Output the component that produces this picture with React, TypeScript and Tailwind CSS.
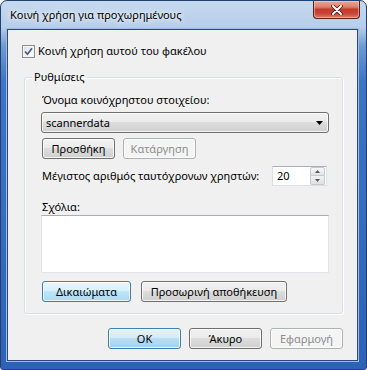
import React from "react";

type Variant = "normal" | "blue" | "disabled" | "default";

function Btn({
  children,
  variant = "normal",
  className = "",
}: {
  children: React.ReactNode;
  variant?: Variant;
  className?: string;
}) {
  const v =
    variant === "blue"
      ? "border-[#3c7fb1] bg-[linear-gradient(to_bottom,#eaf6fd_0%,#d9f0fc_45%,#bee6fd_50%,#a7d9f5_100%)] text-black"
      : variant === "default"
      ? "border-[#3c7fb1] bg-[linear-gradient(to_bottom,#e5f4fc_0%,#d3ebf9_45%,#b9ddf4_50%,#a5d2f0_100%)] text-black shadow-[inset_0_0_0_1px_#cdeefa]"
      : variant === "disabled"
      ? "border-[#adb2b5] bg-[#f4f4f4] text-[#8d8d8d]"
      : "border-[#707070] bg-[linear-gradient(to_bottom,#f2f2f2_0%,#ebebeb_45%,#dddddd_50%,#cfcfcf_100%)] text-black";
  return (
    <div
      className={`flex h-[21px] items-center justify-center rounded-[3px] border text-[11px] leading-[16px] shadow-[inset_0_0_0_1px_rgba(255,255,255,0.75)] ${v} ${className}`}
    >
      {children}
    </div>
  );
}

export default function App() {
  return (
    <div className="h-[370px] w-[367px] overflow-hidden bg-white font-['Noto_Sans',sans-serif] text-[11px] leading-[16px] text-black">
      <div className="flex h-[370px] w-[367px] flex-col rounded-t-[7px] rounded-b-[3px] border border-[#22406e] bg-[linear-gradient(to_bottom,#c6d9ef_0px,#b7cee9_26px,#6f9ad3_45px,#3f74c4_80px,#2d63b7_100%)] pb-[8px] pl-[6px] pr-[8px]">
        {/* title bar */}
        <div className="flex h-[28px] shrink-0 items-start justify-between">
          <div className="pl-[3px] pt-[6px] text-[11px] leading-[16px] text-black [text-shadow:0_0_8px_#ffffff,0_0_4px_#ffffff]">
            Κοινή χρήση για προχωρημένους
          </div>
          <div className="mr-[-2px] flex h-[18px] w-[47px] items-center justify-center rounded-b-[4px] border border-t-0 border-[#5a1f17] bg-[linear-gradient(to_bottom,#e9a99c_0%,#d9806f_35%,#c23a28_50%,#c8473a_75%,#e0806b_100%)] shadow-[inset_0_0_0_1px_rgba(255,210,200,0.5)]">
            <svg width="12" height="10" viewBox="0 0 12 10">
              <path d="M2 1 L10 9 M10 1 L2 9" stroke="#4a1a14" strokeWidth="3.6" strokeLinecap="round" />
              <path d="M2 1 L10 9 M10 1 L2 9" stroke="#ffffff" strokeWidth="2" strokeLinecap="round" />
            </svg>
          </div>
        </div>

        {/* client area */}
        <div className="flex h-[332px] flex-col border border-[#2b4a7a] bg-[#f0f0f0] shadow-[0_0_0_1px_#9dbbe3]">
          {/* checkbox row */}
          <div className="mt-[13px] flex h-[16px] items-center pl-[14px]">
            <div className="flex h-[13px] w-[13px] items-center justify-center border border-[#8e8f8f] bg-[linear-gradient(135deg,#dcdcdc_0%,#f6f6f6_60%,#ffffff_100%)] shadow-[inset_0_0_0_1px_#f4f4f4]">
              <svg width="9" height="9" viewBox="0 0 9 9">
                <path d="M1 4.5 L3.5 7.2 L8 1.2" stroke="#4a5f97" strokeWidth="1.8" fill="none" />
              </svg>
            </div>
            <span className="ml-[3px]">Κοινή χρήση αυτού του φακέλου</span>
          </div>

          {/* group box */}
          <fieldset className="ml-[16px] mr-[14px] mt-[10px] rounded-[3px] border border-[#d5dfe5] pb-[11px] pl-[16px] pr-[13px] shadow-[inset_1px_1px_0_#ffffff,1px_1px_0_#ffffff]">
            <legend className="ml-[-9px] px-[2px] leading-[16px]">Ρυθμίσεις</legend>
            <div className="ml-[1px] mt-[7px] h-[16px]">Όνομα κοινόχρηστου στοιχείου:</div>
            <div className="mt-[4px] flex h-[21px] items-center justify-between rounded-[3px] border border-[#707070] bg-[linear-gradient(to_bottom,#f2f2f2_0%,#ebebeb_45%,#dddddd_50%,#cfcfcf_100%)] pl-[4px] pr-[5px] shadow-[inset_0_0_0_1px_rgba(255,255,255,0.75)]">
              <span>scannerdata</span>
              <svg width="7" height="4" viewBox="0 0 7 4">
                <path d="M0 0 L7 0 L3.5 4 Z" fill="#000000" />
              </svg>
            </div>
            <div className="mt-[5px] flex gap-[8px] pl-[1px]">
              <Btn className="w-[73px]">Προσθήκη</Btn>
              <Btn variant="disabled" className="w-[73px]">
                Κατάργηση
              </Btn>
            </div>
            <div className="mt-[7px] flex h-[20px] items-center justify-between">
              <span className="ml-[1px] whitespace-nowrap">Μέγιστος αριθμός ταυτόχρονων χρηστών:</span>
              <div className="mr-[2px] flex h-[20px] w-[55px] items-center border border-[#dbdfe6] border-t-[#abadb3] bg-white">
                <span className="flex-1 pl-[4px]">20</span>
                <div className="mr-[1px] flex flex-col gap-0">
                  <div className="flex h-[9px] w-[15px] items-center justify-center rounded-t-[2px] border border-[#c5cad0] bg-[linear-gradient(to_bottom,#f7f7f7,#e4e4e4)]">
                    <svg width="5" height="3" viewBox="0 0 5 3">
                      <path d="M0 3 L5 3 L2.5 0 Z" fill="#555a63" />
                    </svg>
                  </div>
                  <div className="flex h-[9px] w-[15px] items-center justify-center rounded-b-[2px] border border-t-0 border-[#c5cad0] bg-[linear-gradient(to_bottom,#f2f2f2,#e0e0e0)]">
                    <svg width="5" height="3" viewBox="0 0 5 3">
                      <path d="M0 0 L5 0 L2.5 3 Z" fill="#555a63" />
                    </svg>
                  </div>
                </div>
              </div>
            </div>
            <div className="ml-[1px] mt-[13px] h-[16px]">Σχόλια:</div>
            <div className="h-[58px] border border-[#e2e3ea] border-t-[#abadb3] bg-white" />
            <div className="mt-[8px] flex gap-[10px] pl-[1px]">
              <Btn variant="blue" className="w-[89px]">
                Δικαιώματα
              </Btn>
              <Btn className="w-[146px]">Προσωρινή αποθήκευση</Btn>
            </div>
          </fieldset>

          {/* bottom buttons */}
          <div className="mt-[14px] flex justify-end gap-[8px] pr-[14px]">
            <Btn variant="default" className="w-[73px]">
              OK
            </Btn>
            <Btn className="w-[73px]">Άκυρο</Btn>
            <Btn variant="disabled" className="w-[73px]">
              Εφαρμογή
            </Btn>
          </div>
        </div>
      </div>
    </div>
  );
}
